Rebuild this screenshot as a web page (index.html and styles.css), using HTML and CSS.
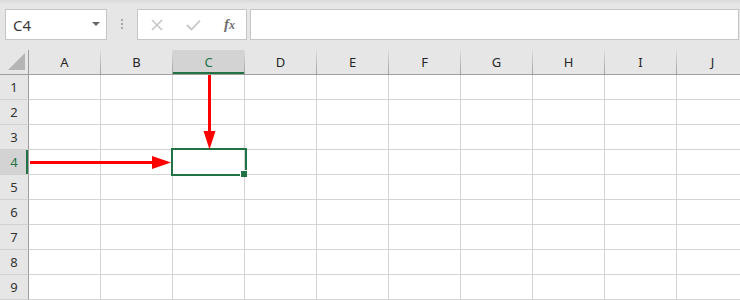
FILE: index.html
```html
<!DOCTYPE html>
<html lang="en">
<head>
  <meta charset="UTF-8" />
  <title>Sheet</title>
  <link rel="stylesheet" href="styles.css">
</head>
<body>
  <div class="page">
    <div class="toolbar">
      <div class="name-box">
        <span>C4</span>
        <span class="drop"></span>
      </div>
      <div class="grip"><i></i><i></i><i></i></div>
      <div class="fx-box">
        <svg class="icon" width="14" height="14" viewBox="0 0 14 14">
          <path d="M2 2 L12 12 M12 2 L2 12" stroke="#c6c6c6" stroke-width="1.6" fill="none"/>
        </svg>
        <svg class="icon" width="15" height="12" viewBox="0 0 15 12">
          <path d="M1 6 L5.5 10.5 L14 1.5" stroke="#c6c6c6" stroke-width="1.8" fill="none"/>
        </svg>
        <span class="fx">f<small>x</small></span>
      </div>
      <div class="formula-bar"></div>
    </div>

    <div class="sheet">
      <div class="corner"><span class="tri"></span></div>
      <div class="col">A</div>
      <div class="col">B</div>
      <div class="col selected">C</div>
      <div class="col">D</div>
      <div class="col">E</div>
      <div class="col">F</div>
      <div class="col">G</div>
      <div class="col">H</div>
      <div class="col">I</div>
      <div class="col">J</div>

      <div class="row">1</div>
      <div class="cell"></div><div class="cell"></div><div class="cell"></div><div class="cell"></div><div class="cell"></div>
      <div class="cell"></div><div class="cell"></div><div class="cell"></div><div class="cell"></div><div class="cell"></div>

      <div class="row">2</div>
      <div class="cell"></div><div class="cell"></div><div class="cell"></div><div class="cell"></div><div class="cell"></div>
      <div class="cell"></div><div class="cell"></div><div class="cell"></div><div class="cell"></div><div class="cell"></div>

      <div class="row">3</div>
      <div class="cell"></div><div class="cell"></div><div class="cell"></div><div class="cell"></div><div class="cell"></div>
      <div class="cell"></div><div class="cell"></div><div class="cell"></div><div class="cell"></div><div class="cell"></div>

      <div class="row selected">4</div>
      <div class="cell"></div><div class="cell"></div>
      <div class="cell active"><span class="handle"></span></div>
      <div class="cell"></div><div class="cell"></div>
      <div class="cell"></div><div class="cell"></div><div class="cell"></div><div class="cell"></div><div class="cell"></div>

      <div class="row">5</div>
      <div class="cell"></div><div class="cell"></div><div class="cell"></div><div class="cell"></div><div class="cell"></div>
      <div class="cell"></div><div class="cell"></div><div class="cell"></div><div class="cell"></div><div class="cell"></div>

      <div class="row">6</div>
      <div class="cell"></div><div class="cell"></div><div class="cell"></div><div class="cell"></div><div class="cell"></div>
      <div class="cell"></div><div class="cell"></div><div class="cell"></div><div class="cell"></div><div class="cell"></div>

      <div class="row">7</div>
      <div class="cell"></div><div class="cell"></div><div class="cell"></div><div class="cell"></div><div class="cell"></div>
      <div class="cell"></div><div class="cell"></div><div class="cell"></div><div class="cell"></div><div class="cell"></div>

      <div class="row">8</div>
      <div class="cell"></div><div class="cell"></div><div class="cell"></div><div class="cell"></div><div class="cell"></div>
      <div class="cell"></div><div class="cell"></div><div class="cell"></div><div class="cell"></div><div class="cell"></div>

      <div class="row">9</div>
      <div class="cell"></div><div class="cell"></div><div class="cell"></div><div class="cell"></div><div class="cell"></div>
      <div class="cell"></div><div class="cell"></div><div class="cell"></div><div class="cell"></div><div class="cell"></div>
    </div>

    <!-- red pointer arrows drawn over the grid -->
    <svg class="arrows" width="740" height="300" viewBox="0 0 740 300">
      <rect x="30" y="161" width="124" height="3" fill="#ff0000"/>
      <polygon points="152,156 171,162.5 152,169" fill="#ff0000"/>
      <rect x="208" y="75" width="3" height="58" fill="#ff0000"/>
      <polygon points="203.5,131 215.5,131 209.5,149.5" fill="#ff0000"/>
    </svg>
  </div>
</body>
</html>
```

FILE: styles.css
```css
*,
*::before,
*::after {
  box-sizing: border-box;
  margin: 0;
  padding: 0;
}

body {
  width: 740px;
  height: 300px;
  overflow: hidden;
  background-color: #e6e6e6;
  font-family: "Noto Sans", "Open Sans", sans-serif;
}

.page {
  position: relative;
  width: 740px;
  height: 300px;
  overflow: hidden;
}

.toolbar {
  display: flex;
  align-items: flex-start;
  height: 50px;
  padding: 9px 0 0 5px;
  background: linear-gradient(#d9d9d9 0, #e6e6e6 4px);
}

.name-box {
  display: flex;
  align-items: center;
  justify-content: space-between;
  width: 102px;
  height: 31px;
  padding: 0 6px 0 7px;
  background-color: #fff;
  border: 1px solid #c6c6c6;
  color: #3a3a3a;
  font-size: 15px;
}

.drop {
  width: 0;
  height: 0;
  border-left: 4px solid transparent;
  border-right: 4px solid transparent;
  border-top: 4px solid #666;
  margin-bottom: 2px;
}

.grip {
  display: flex;
  flex-direction: column;
  align-items: center;
  gap: 2px;
  width: 30px;
  padding-top: 10px;
}

.grip i {
  display: block;
  width: 2px;
  height: 2px;
  background-color: #a6a6a6;
}

.fx-box {
  display: flex;
  align-items: center;
  width: 110px;
  height: 31px;
  padding-left: 12px;
  background-color: #fff;
  border: 1px solid #c6c6c6;
}

.fx-box .icon {
  margin-right: 22px;
}

.fx-box .icon + .icon {
  margin-right: 23px;
}

.fx {
  font-family: "Liberation Serif", serif;
  font-style: italic;
  font-weight: bold;
  font-size: 15px;
  color: #6f6f6f;
}

.fx small {
  font-size: 12px;
}

.formula-bar {
  width: 489px;
  height: 31px;
  margin-left: 3px;
  background-color: #fff;
  border: 1px solid #c6c6c6;
}

.sheet {
  display: grid;
  grid-template-columns: 29px repeat(10, 72px);
  grid-auto-rows: 25px;
  background-color: #fff;
}

.corner,
.col {
  background-color: #e6e6e6;
  border-bottom: 1px solid #9d9d9d;
}

.corner {
  position: relative;
  border-right: 1px solid #9d9d9d;
}

.tri {
  position: absolute;
  left: 8px;
  top: 3px;
  width: 0;
  height: 0;
  border-left: 17px solid transparent;
  border-bottom: 17px solid #b4b4b4;
}

.col {
  display: flex;
  align-items: center;
  justify-content: center;
  font-size: 13px;
  color: #262626;
  border-right: 1px solid;
  border-image: linear-gradient(#e0e0e0, #9e9e9e) 1;
  border-bottom: 1px solid #9d9d9d;
}

.col.selected {
  background-color: #d3d3d3;
  color: #217346;
  box-shadow: inset 0 -2px 0 #217346;
}

.row {
  display: flex;
  align-items: center;
  justify-content: center;
  font-size: 13px;
  color: #333;
  background-color: #e6e6e6;
  border-right: 1px solid #9d9d9d;
  border-bottom: 1px solid #d0d0d0;
}

.row.selected {
  background-color: #d3d3d3;
  color: #217346;
  box-shadow: inset -2px 0 0 #217346;
}

.cell {
  border-right: 1px solid #d4d4d4;
  border-bottom: 1px solid #d4d4d4;
}

.cell.active {
  position: relative;
}

.cell.active::after {
  content: "";
  position: absolute;
  left: -2px;
  top: -2px;
  width: 76px;
  height: 28px;
  border: 2px solid #217346;
}

.handle {
  position: absolute;
  left: 67px;
  top: 20px;
  width: 7px;
  height: 7px;
  background-color: #217346;
  border: 1px solid #fff;
  border-right: 0;
  border-bottom: 0;
  z-index: 1;
}

.arrows {
  position: absolute;
  left: 0;
  top: 0;
  pointer-events: none;
}
```
